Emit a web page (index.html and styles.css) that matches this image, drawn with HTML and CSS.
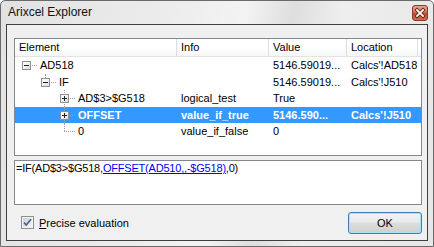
FILE: index.html
```html
<!DOCTYPE html>
<html lang="en">
<head>
    <meta charset="UTF-8">
    <title>Arixcel Explorer</title>
    <link rel="stylesheet" href="styles.css">
</head>
<body>

<div class="window">
    <!-- Barra de título -->
    <div class="titlebar">
        <span class="title">Arixcel Explorer</span>
        <div class="close">
            <svg width="14" height="14" viewBox="0 0 14 14">
                <path d="M4 4 L10 10 M10 4 L4 10" stroke="#5a1e12" stroke-width="3.4" stroke-linecap="square"/>
                <path d="M4 4 L10 10 M10 4 L4 10" stroke="#fff" stroke-width="1.8" stroke-linecap="square"/>
            </svg>
        </div>
    </div>

    <div class="client">
        <!-- Árvore da fórmula -->
        <div class="listview">
            <div class="header">
                <div class="hcell">Element</div>
                <div class="hcell">Info</div>
                <div class="hcell">Value</div>
                <div class="hcell">Location</div>
                <div class="hfill"></div>
            </div>

            <div class="row">
                <div class="cell el lv0"><span class="branch"><span class="box minus"></span></span><span>AD518</span></div>
                <div class="cell"></div>
                <div class="cell">5146.59019...</div>
                <div class="cell">Calcs'!AD518</div>
            </div>
            <div class="row">
                <div class="cell el lv1"><span class="branch end"><span class="box minus"></span></span><span>IF</span></div>
                <div class="cell"></div>
                <div class="cell">5146.59019...</div>
                <div class="cell">Calcs'!J510</div>
            </div>
            <div class="row">
                <div class="cell el lv2"><span class="branch mid"><span class="box plus"></span></span><span>AD$3&gt;$G518</span></div>
                <div class="cell">logical_test</div>
                <div class="cell">True</div>
                <div class="cell"></div>
            </div>
            <div class="row selected">
                <div class="cell el lv2"><span class="branch mid"><span class="box plus"></span></span><span>OFFSET</span></div>
                <div class="cell">value_if_true</div>
                <div class="cell">5146.590...</div>
                <div class="cell">Calcs'!J510</div>
            </div>
            <div class="row">
                <div class="cell el lv2"><span class="branch end"></span><span>0</span></div>
                <div class="cell">value_if_false</div>
                <div class="cell">0</div>
                <div class="cell"></div>
            </div>
        </div>

        <!-- Fórmula -->
        <div class="formula">=IF(AD$3&gt;$G518,<span class="link">OFFSET(AD510,,-$G518)</span>,0)</div>

        <div class="footer">
            <label class="check">
                <svg class="checkbox" width="13" height="13" viewBox="0 0 13 13">
                    <defs>
                        <linearGradient id="cb" x1="0" y1="0" x2="1" y2="1">
                            <stop offset="0" stop-color="#cbcfd5"/>
                            <stop offset="1" stop-color="#f6f6f6"/>
                        </linearGradient>
                    </defs>
                    <rect x="0.5" y="0.5" width="12" height="12" fill="#f4f4f4" stroke="#8e8f8f"/>
                    <rect x="2" y="2" width="9" height="9" fill="url(#cb)"/>
                    <path d="M3 6.5 L5.2 9 L10 3.2" fill="none" stroke="#4a5c8c" stroke-width="1.6"/>
                </svg>
                <span><u>P</u>recise evaluation</span>
            </label>
            <button class="ok">OK</button>
        </div>
    </div>
</div>

</body>
</html>
```

FILE: styles.css
```css
body {
    margin: 0;
    background-color: #fff;
    font-family: "Liberation Sans", Arial, sans-serif;
    font-size: 11px;
    color: #000;
}
.window {
    box-sizing: border-box;
    width: 434px;
    height: 247px;
    border: 1px solid #6a6a6a;
    border-radius: 5px 5px 0 0;
    padding: 0 5px 5px 5px;
    display: flex;
    flex-direction: column;
    background: linear-gradient(100deg, #e2e2e2 0%, #ececec 35%, #f3f3f3 52%, #dedede 62%, #eeeeee 72%, #e6e6e6 100%);
}
.titlebar {
    height: 23px;
    flex: none;
    display: flex;
    align-items: flex-start;
    padding-left: 2px;
}
.title {
    font-size: 12px;
    line-height: 23px;
    color: #111;
}
.close {
    margin-left: auto;
    margin-top: 4px;
    box-sizing: border-box;
    width: 16px;
    height: 16px;
    border: 1px solid #8c3a2a;
    border-radius: 3px;
    background: linear-gradient(#e6a392, #d2705a 45%, #c04a30 55%, #d46a4e);
    display: flex;
    align-items: center;
    justify-content: center;
}
.client {
    flex: 1;
    border: 1px solid #3f3f3f;
    background-color: #f0f0f0;
    padding: 13px 5px 0 7px;
    display: flex;
    flex-direction: column;
}
.listview {
    box-sizing: border-box;
    height: 118px;
    flex: none;
    border: 1px solid #828790;
    background-color: #fff;
    overflow: hidden;
}
.header, .row {
    display: grid;
    grid-template-columns: 162px 92px 78px 71px 1fr;
}
.header {
    height: 18px;
    box-sizing: border-box;
    border-bottom: 1px solid #e3e3e3;
    background: linear-gradient(#fff, #fff 55%, #f5f6f7);
}
.hcell {
    border-right: 1px solid #dedede;
    padding-left: 4px;
    line-height: 17px;
    white-space: nowrap;
}
.row {
    height: 16.5px;
    line-height: 16.5px;
}
.row.selected {
    background-color: #3399ff;
    color: #fff;
    font-weight: bold;
}
.cell {
    padding-left: 4px;
    white-space: nowrap;
    overflow: hidden;
}
.cell.el {
    display: flex;
    padding-left: 2px;
}
.cell.lv1 {
    padding-left: 21px;
}
.cell.lv2 {
    padding-left: 40px;
}
.branch {
    position: relative;
    flex: none;
    width: 19px;
    margin-right: 4px;
}
.branch::after {
    content: "";
    position: absolute;
    left: 9px;
    top: 8px;
    width: 11px;
    border-top: 1px dotted #a0a0a0;
}
.branch.mid::before, .branch.end::before {
    content: "";
    position: absolute;
    left: 9px;
    top: 0;
    bottom: 0;
    border-left: 1px dotted #a0a0a0;
}
.branch.end::before {
    bottom: auto;
    height: 8px;
}
.box {
    position: absolute;
    left: 5px;
    top: 4px;
    width: 7px;
    height: 7px;
    border: 1px solid #919191;
    background: linear-gradient(135deg, #fff, #f2f2f2 50%, #d8d8d8);
    z-index: 1;
}
.box::before {
    content: "";
    position: absolute;
    left: 1px;
    top: 3px;
    width: 5px;
    height: 1px;
    background-color: #222;
}
.box.plus::after {
    content: "";
    position: absolute;
    left: 3px;
    top: 1px;
    width: 1px;
    height: 5px;
    background-color: #222;
}
.formula {
    box-sizing: border-box;
    height: 45px;
    flex: none;
    margin-top: 4px;
    border: 1px solid #828790;
    background-color: #fff;
    padding: 0 1px;
    line-height: 14px;
    white-space: nowrap;
    letter-spacing: -0.2px;
}
.link {
    color: #0000ff;
    text-decoration: underline;
}
.footer {
    flex: 1;
    display: flex;
    align-items: center;
    justify-content: space-between;
    padding-left: 7px;
}
.check {
    display: flex;
    align-items: center;
    gap: 5px;
}
.checkbox {
    display: block;
}
.ok {
    box-sizing: border-box;
    width: 74px;
    height: 22px;
    border: 1px solid #3c7fb1;
    border-radius: 3px;
    box-shadow: inset 0 0 0 1px #a6e3f7;
    background: linear-gradient(#f2f2f2, #ebebeb 45%, #dddddd 50%, #cfcfcf);
    font-family: "Liberation Sans", Arial, sans-serif;
    font-size: 11px;
    color: #000;
    padding: 0;
}
```
